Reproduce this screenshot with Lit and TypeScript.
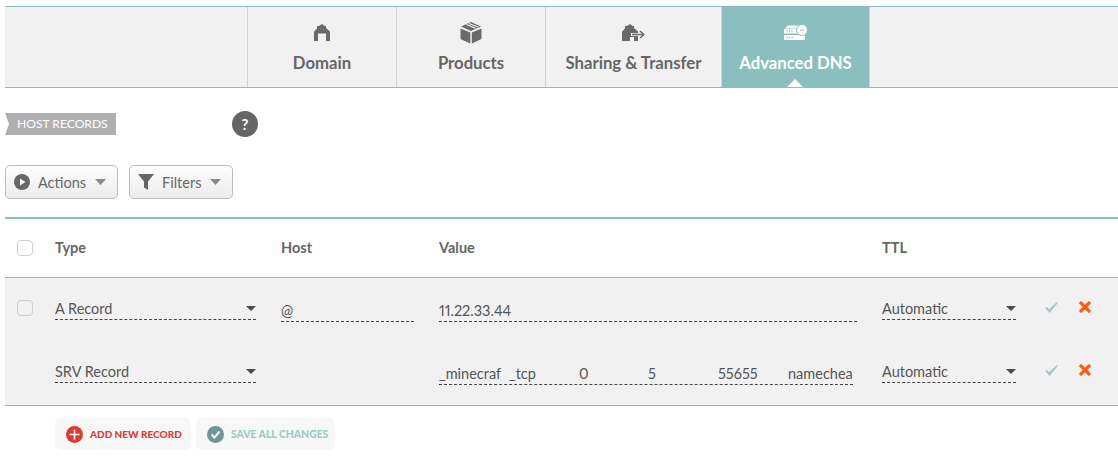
import { LitElement, html, css, svg } from "lit";
import { customElement } from "lit/decorators.js";

const caret = html`<svg class="caret" width="10" height="5" viewBox="0 0 10 5"><path d="M0 0h10L5 5z" fill="#4a4a4a"/></svg>`;
const check = html`<svg width="13" height="11" viewBox="0 0 13 11"><path d="M0 6l1.800-1.300L4 7.200 11.800 0 13 .7 4.600 11z" fill="#9accc9"/></svg>`;
const cross = html`<svg width="12" height="12" viewBox="0 0 12 12"><path d="M1 1l10 10M11 1L1 11" stroke="#ff5a14" stroke-width="3.200" fill="none"/></svg>`;
const btnCaret = html`<svg class="c" width="11" height="6" viewBox="0 0 11 6"><path d="M0 0h11L5.500 6z" fill="#888"/></svg>`;

const icons = {
  home: svg`<svg width="16" height="17" viewBox="0 0 16 17"><path fill-rule="evenodd" d="M8 0l2.500 2H12v2l4 3.500V17h-4V9.500H4V17H0V7.500l3-3V2h2z" fill="#6a6a6a"/></svg>`,
  box: svg`<svg width="22" height="22" viewBox="0 0 22 22"><path d="M0.500 6.500L10.300 10.500V21.500L1.500 17.500Q.5 17 .5 16z" fill="#6a6a6a"/><path d="M21.500 6.500L11.800 10.500V21.500L20.500 17.500Q21.500 17 21.500 16z" fill="#6a6a6a"/><path d="M11 0L21 4.500 11 9 1 4.500z" fill="#6a6a6a"/><path d="M6.500 2.600L15.500 6.200M9 1.400L18 5" stroke="#f1f1f1" stroke-width="1.100"/></svg>`,
  share: svg`<svg width="23" height="17" viewBox="0 0 23 17"><path d="M8 0l2.500 2H12v2l4 3.500V9H9v3h7v5h-4v-4H8v4H0V7.500l3-3V2h2z" fill="#6a6a6a"/><path d="M10 10.500h11M18 7l4 3.500-4 3.500" stroke="#6a6a6a" stroke-width="1.500" fill="none"/></svg>`,
  dns: svg`<svg width="23" height="15" viewBox="0 0 23 15"><path d="M4 0.500h10l3 3H1z" fill="#fff"/><rect x="0" y="4" width="17" height="4.500" fill="#fff"/><rect x="0" y="10" width="21" height="5" fill="#fff"/><circle cx="18" cy="5" r="5.500" fill="#fff" stroke="#8bbfbf"/><path d="M2.500 6h1.200M5 6h1.200M7.500 6h1.200M2.500 12.500h1.200M5 12.500h1.200M7.500 12.500h1.200" stroke="#8bbfbf" stroke-width="1.500"/><path d="M16 5h4" stroke="#8bbfbf" stroke-width="1"/></svg>`,
};

@customElement("app-root")
export class AppRoot extends LitElement {
  static styles = css`
    :host { display: block; box-sizing: border-box; height: 458px; overflow: hidden; padding: 6px 0 0 5px; background: #fff; font-family: "Lato", "Open Sans", sans-serif; font-variant-numeric: proportional-nums; color: #555; }
    * { box-sizing: border-box; }
    .nav { display: flex; height: 82px; background: #f1f1f1; border-top: 1px solid #8bbfbf; border-bottom: 1px solid #8bbfbf; padding-left: 242px; }
    .tab { position: relative; display: flex; flex-direction: column; align-items: center; border-left: 1px solid #d2d2d2; width: 149px; color: #666; font-weight: 700; font-size: 16.700px; }
    .tab.share { width: 176px; }
    .tab.on { background: #8bbfbf; color: #fff; border-right: 1px solid #d2d2d2; }
    .ico { height: 37px; padding-top: 14px; display: flex; align-items: center; }
    .lbl { margin-top: 8px; line-height: 22px; white-space: nowrap; }
    .tri { position: absolute; left: 65px; bottom: 0; width: 0; height: 0; border: 8px solid transparent; border-top: 0; border-bottom-color: #fff; }
    .title { display: flex; align-items: center; height: 26px; margin-top: 23px; }
    .ribbon { width: 111px; height: 22px; background: #b0b0b3; color: #fff; font-size: 12.100px; line-height: 22px; padding-left: 12px; clip-path: polygon(0 0, 100% 0, 100% 100%, 0 100%, 4px 50%); white-space: nowrap; }
    .help { width: 26px; height: 26px; margin-left: 116px; border-radius: 50%; background: #666; color: #fff; font: 700 15px/26px "Lato", sans-serif; text-align: center; }
    .tools { display: flex; gap: 11px; margin-top: 28px; }
    .btn { display: flex; align-items: center; height: 34px; border: 1px solid #bdbdbd; border-radius: 5px; background: linear-gradient(#fdfdfd, #ececec); color: #666; font-size: 14.500px; padding-left: 8px; }
    .btn.a { width: 113px; }
    .btn.f { width: 104px; }
    .btn .t { margin-left: 8px; }
    .btn .c { margin-left: 9px; }
    .table { margin-top: 18px; border-top: 2px solid #8bbfbf; }
    .row { display: grid; grid-template-columns: 50px 226px 158px 443px 159px 1fr; align-items: center; }
    .head { height: 59px; padding-bottom: 2px; border-bottom: 1px solid #8bbfbf; font-weight: 700; font-size: 14.500px; color: #666; }
    .head .cb { margin-top: 2px; }
    .body { background: #f1f1f1; border-bottom: 1px solid #8bbfbf; height: 128px; display: flex; flex-direction: column; }
    .body .row { height: 63px; align-items: start; }
    .cb { width: 16px; height: 16px; margin-left: 12px; border: 1px solid #cfcfcf; border-radius: 4px; background: #fff; }
    .body .cb { margin-top: 22px; background: #f1f1f1; }
    .field { display: flex; align-items: center; justify-content: space-between; height: 22px; margin: 20px 25px 0 0; border-bottom: 1px dashed #444; font-size: 14.500px; color: #555; white-space: nowrap; }
    .field.txt { margin-top: 22px; }
    .srv { display: grid; grid-template-columns: 70px 70px 69px 70px 70px 1fr; margin-right: 29px; }
    .acts { display: flex; align-items: center; height: 14px; margin-top: 22px; gap: 21px; padding-left: 4px; }
    .foot { display: flex; gap: 5px; margin: 12px 0 0 50px; }
    .fb { display: flex; align-items: center; height: 32px; border-radius: 6px; background: #f7f7f7; font-weight: 900; padding-left: 11px; white-space: nowrap; }
    .fb svg { margin-right: 7px; }
    .add { width: 136px; color: #e03a2f; font-size: 10px; }
    .save { width: 139px; color: #9accc9; font-size: 10.400px; }
  `;

  render() {
    return html`
      <div class="nav">
        <div class="tab"><div class="ico">${icons.home}</div><div class="lbl">Domain</div></div>
        <div class="tab"><div class="ico">${icons.box}</div><div class="lbl">Products</div></div>
        <div class="tab share"><div class="ico">${icons.share}</div><div class="lbl">Sharing &amp; Transfer</div></div>
        <div class="tab on"><div class="ico">${icons.dns}</div><div class="lbl">Advanced DNS</div><div class="tri"></div></div>
      </div>
      <div class="title"><div class="ribbon">HOST RECORDS</div><div class="help">?</div></div>
      <div class="tools">
        <div class="btn a">
          <svg width="16" height="16" viewBox="0 0 16 16"><circle cx="8" cy="8" r="8" fill="#666"/><path d="M6 4.500l5.500 3.500L6 11.500z" fill="#f5f5f5"/></svg>
          <span class="t">Actions</span>${btnCaret}
        </div>
        <div class="btn f">
          <svg width="16" height="18" viewBox="0 0 16 18"><path d="M0 1h16L10 8.500V17L6 14.500V8.500z" fill="#666"/></svg>
          <span class="t">Filters</span>${btnCaret}
        </div>
      </div>
      <div class="table">
        <div class="row head"><div><div class="cb"></div></div><div>Type</div><div>Host</div><div>Value</div><div>TTL</div><div></div></div>
        <div class="body">
          <div class="row">
            <div><div class="cb"></div></div>
            <div class="field"><span>A Record</span>${caret}</div>
            <div class="field txt"><span>@</span></div>
            <div class="field txt"><span>11.22.33.44</span></div>
            <div class="field"><span>Automatic</span>${caret}</div>
            <div class="acts">${check}${cross}</div>
          </div>
          <div class="row">
            <div></div>
            <div class="field"><span>SRV Record</span>${caret}</div>
            <div></div>
            <div class="field txt srv"><span>_minecraf</span><span>_tcp</span><span>0</span><span>5</span><span>55655</span><span>namechea</span></div>
            <div class="field"><span>Automatic</span>${caret}</div>
            <div class="acts">${check}${cross}</div>
          </div>
        </div>
      </div>
      <div class="foot">
        <div class="fb add"><svg width="17" height="17" viewBox="0 0 17 17"><circle cx="8.500" cy="8.500" r="8.500" fill="#e03a2f"/><path d="M8.500 3.500v10M3.500 8.500h10" stroke="#fff" stroke-width="1.600"/></svg>ADD NEW RECORD</div>
        <div class="fb save"><svg width="17" height="17" viewBox="0 0 17 17"><circle cx="8.500" cy="8.500" r="8.500" fill="#6b9597"/><path d="M4.500 8.500l3 3 5-6" stroke="#fff" stroke-width="2" fill="none"/></svg>SAVE ALL CHANGES</div>
      </div>
    `;
  }
}
